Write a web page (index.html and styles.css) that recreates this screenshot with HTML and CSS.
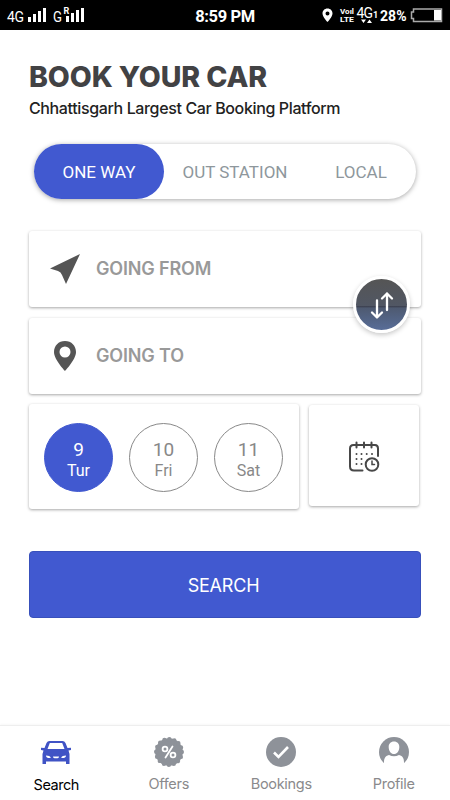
FILE: index.html
```html
<!DOCTYPE html>
<html lang="en">
<head>
    <meta charset="utf-8">
    <meta name="viewport" content="width=device-width, initial-scale=1">
    <title>Book Your Car</title>
    <link rel="stylesheet" href="styles.css">
</head>
<body>
    <header class="status-bar">
        <svg class="status-left" width="90" height="30" viewBox="0 0 90 30" fill="#fff">
            <text class="net" x="7" y="22" textLength="17">4G</text>
            <path d="M28 17h3v5h-3zM33 14h3v8h-3zM38 11h3v11h-3zM43 8h3v14h-3z"/>
            <text class="net" x="53" y="22" textLength="9" lengthAdjust="spacingAndGlyphs">G</text>
            <text class="roaming" x="63.5" y="13.5">R</text>
            <path d="M66 16h3v6h-3zM71 13h3v9h-3zM76 10h3v12h-3zM81 8h3v14h-3z"/>
        </svg>
        <span class="time">8:59 PM</span>
        <svg class="status-right" width="130" height="30" viewBox="320 0 130 30" fill="#fff">
            <path fill-rule="evenodd" d="M327.5 8.500c-3 0-5 2.200-5 5 0 3.300 5 8.500 5 8.500s5-5.200 5-8.500c0-2.800-2-5-5-5zm0 3a2 2 0 1 1 0 4 2 2 0 0 1 0-4z"/>
            <text class="volte" x="340" y="14" textLength="14" lengthAdjust="spacingAndGlyphs">Voıl</text>
            <text class="volte" x="340" y="21.500" textLength="14" lengthAdjust="spacingAndGlyphs">LTE</text>
            <text class="net" x="356.500" y="18" textLength="16.500">4G</text>
            <text class="sim" x="373" y="18">1</text>
            <path d="M361 19.500h5l-2.500 3.500zM367 23h5l-2.500-3.500z"/>
            <text class="percent" x="380" y="21" textLength="26.500">28%</text>
            <path d="M413.500 9h28v12.500h-28v-3h-2v-6.500h2z" fill="none" stroke="#aaa" stroke-width="1.500"/>
            <path d="M434 10h7v10.500h-7z"/>
        </svg>
    </header>

    <main class="content">
        <h1>BOOK YOUR CAR</h1>
        <p class="tagline">Chhattisgarh Largest Car Booking Platform</p>

        <div class="tabs">
            <button class="tab active">ONE WAY</button>
            <button class="tab station">OUT STATION</button>
            <button class="tab local">LOCAL</button>
        </div>

        <div class="route">
            <div class="card place">
                <svg width="32" height="32" viewBox="0 0 32 32" fill="#555">
                    <path d="M31 1L1 15.500 9 18q3 1 4 4l4 9z"/>
                </svg>
                <span>GOING FROM</span>
            </div>
            <div class="card place">
                <svg width="32" height="32" viewBox="0 0 32 32" fill="#555">
                    <path fill-rule="evenodd" d="M16 1C9.500 1 5 5.800 5 12c0 7.500 11 19 11 19s11-11.500 11-19C27 5.800 22.500 1 16 1zm0 5.500a5.500 5.500 0 1 1 0 11 5.500 5.500 0 0 1 0-11z"/>
                </svg>
                <span>GOING TO</span>
            </div>
            <button class="swap" aria-label="Swap">
                <svg width="52" height="52" viewBox="0 0 52 52" fill="none" stroke="#fff" stroke-width="2.300" stroke-linecap="round" stroke-linejoin="round">
                    <path d="M21 21.500v17M16 33.500l5 5 5-5M31 31V14.500M26 19.500l5-5 5 5"/>
                </svg>
            </button>
        </div>

        <div class="date-row">
            <div class="card dates">
                <button class="day active"><b>9</b><span>Tur</span></button>
                <button class="day"><b>10</b><span>Fri</span></button>
                <button class="day"><b>11</b><span>Sat</span></button>
            </div>
            <button class="card calendar" aria-label="Calendar">
                <svg width="32" height="32" viewBox="0 0 32 32" fill="none" stroke="#484848" stroke-width="2" stroke-linecap="round">
                    <path d="M14.500 30.500H6q-4 0-4-4V8.500Q2 5 5.500 5h21.500q3 0 3 3.500v7.500M8.500 2.500v5M16 2.500v5M23.500 2.500v5"/>
                    <circle cx="24" cy="24.500" r="6.300"/>
                    <path d="M24 21v3.500h2.500" stroke-width="1.500"/>
                    <path d="M8.500 14h.01M13.500 14h.01M18.700 14h.01M24 14h.01M8.500 19h.01M13.500 19h.01M8.500 24h.01M13.500 24h.01"/>
                </svg>
            </button>
        </div>

        <button class="search-btn">SEARCH</button>
    </main>

    <nav class="bottom-nav">
        <a class="nav-item active">
            <svg width="32" height="32" viewBox="0 0 32 32" fill="#4053c5">
                <path fill-rule="evenodd" d="M9.500 5h13q2 0 3 2l2 5 3.500-.2v2.200l-2.500.5 1 3.500v10h-3.500v-2.500H6v2.500H2.500V18l1-3.500L1 14v-2.200l3.500.2 2-5q1-2 3-2zm.3 2L7.500 13h17l-2.300-6zM6 19.500c0 2.200 2 2.800 4.800 2.500-.5-1.800-2.300-2.500-4.800-2.500zm20 0c-2.500 0-4.300.7-4.800 2.500 2.800.3 4.800-.3 4.800-2.500zM13 20.500q0 1.700 1.500 1.700h3q1.500 0 1.500-1.700z"/>
            </svg>
            <span>Search</span>
        </a>
        <a class="nav-item">
            <svg width="32" height="32" viewBox="0 0 32 32">
                <circle cx="16" cy="16" r="13.800" fill="#8e9299"/>
                <circle cx="16" cy="16" r="12.800" fill="none" stroke="#8e9299" stroke-width="4.400" stroke-linecap="round" stroke-dasharray="0 5.0265"/>
                <g fill="none" stroke="#fff" stroke-width="1.800">
                    <circle cx="12" cy="13" r="2.400"/>
                    <circle cx="20" cy="19" r="2.400"/>
                    <path d="M19.500 10.500l-7 11" stroke-linecap="round"/>
                </g>
            </svg>
            <span>Offers</span>
        </a>
        <a class="nav-item">
            <svg width="32" height="32" viewBox="0 0 32 32">
                <circle cx="16" cy="16" r="15" fill="#8e9299"/>
                <path d="M9 16.500l4.500 4.500 9.500-10" fill="none" stroke="#fff" stroke-width="2.600"/>
            </svg>
            <span>Bookings</span>
        </a>
        <a class="nav-item">
            <svg width="32" height="32" viewBox="0 0 32 32">
                <circle cx="16" cy="16" r="15" fill="#8e9299"/>
                <path d="M16 5.500c3.600 0 5.500 2.600 5.300 6-.3 4-2.300 6.500-5.300 6.500s-5-2.500-5.300-6.500c-.2-3.400 1.700-6 5.300-6zM6 32v-5.500c0-4 1-6.500 5-7.500q5 2.500 10 0c4 1 5 3.500 5 7.500V32z" fill="#fff"/>
            </svg>
            <span>Profile</span>
        </a>
    </nav>
</body>
</html>
```
FILE: styles.css
```css
* {
    box-sizing: border-box;
}
body {
    margin: 0;
    height: 800px;
    display: flex;
    flex-direction: column;
    overflow: hidden;
    background: #fff;
    font-family: Inter, sans-serif;
}
button {
    padding: 0;
    border: none;
    background: none;
    font-family: Roboto, sans-serif;
    cursor: pointer;
}
svg {
    display: block;
    flex: none;
}
.status-bar {
    flex: none;
    height: 30px;
    display: flex;
    justify-content: space-between;
    background: #000;
    color: #fff;
    font-family: Roboto, sans-serif;
}
.time {
    margin-left: 40px;
    font-size: 16.5px;
    font-weight: 700;
    line-height: 33px;
    letter-spacing: -0.4px;
    white-space: nowrap;
}
.net {
    font-size: 14px;
}
.roaming {
    font-size: 9px;
    font-weight: 700;
}
.volte {
    font-size: 7px;
    font-weight: 700;
}
.sim {
    font-size: 9px;
    font-weight: 700;
}
.percent {
    font-size: 14px;
    font-weight: 700;
}
.content {
    flex: 1;
    padding: 30px 29px 0;
}
h1 {
    margin: 0;
    color: #424244;
    font-size: 28.5px;
    font-weight: 800;
    line-height: 34px;
    letter-spacing: -0.1px;
    white-space: nowrap;
}
.tagline {
    margin: 4px 0 0;
    color: #222;
    font-size: 16px;
    font-weight: 450;
    line-height: 21px;
    letter-spacing: -0.37px;
    white-space: nowrap;
}
.tabs {
    display: flex;
    width: 382px;
    height: 55px;
    margin: 25px 0 0 5px;
    border-radius: 28px;
    box-shadow: 0 1px 5px rgba(0,0,0,0.35);
}
.tab {
    color: #8e979c;
    font-size: 17px;
}
.tab.active {
    width: 130px;
    border-radius: 28px;
    background: #4159d0;
    color: #fff;
}
.station {
    width: 142px;
}
.local {
    width: 110px;
}
.card {
    border-radius: 3px;
    background: #fff;
    box-shadow: 0 1px 3px rgba(0,0,0,0.35);
}
.route {
    position: relative;
    display: grid;
    gap: 11px;
    margin-top: 32px;
}
.place {
    display: flex;
    align-items: center;
    height: 76px;
    padding-left: 20px;
    gap: 15px;
    color: #999;
    font-size: 18px;
    font-weight: 600;
    letter-spacing: -0.15px;
}
.place span {
    margin-top: -2px;
}
.swap {
    position: absolute;
    top: 45px;
    right: 11px;
    width: 57px;
    height: 57px;
    border: 3px solid #fff;
    border-radius: 50%;
    background: linear-gradient(#555 0%, #515764 53%, #3d4252 54%, #4e5a71 57%, #586d98 100%);
    box-shadow: 0 2px 5px rgba(0,0,0,0.22);
}
.date-row {
    display: flex;
    gap: 10px;
    margin-top: 10px;
}
.dates {
    display: flex;
    width: 270px;
    height: 105px;
    padding: 19px 15px;
    gap: 16px;
}
.day {
    display: flex;
    flex-direction: column;
    align-items: center;
    width: 69px;
    height: 69px;
    padding-top: 15px;
    border: 1px solid #888;
    border-radius: 50%;
    color: #888;
    font-size: 16px;
}
.day b {
    font-size: 19px;
    font-weight: 400;
    line-height: 21px;
}
.day span {
    line-height: 22px;
}
.day.active {
    border-color: #4159d0;
    background: #4159d0;
    color: #fff;
}
.calendar {
    display: flex;
    align-items: center;
    justify-content: center;
    width: 110px;
    height: 101px;
    margin-top: 1px;
}
.search-btn {
    display: block;
    width: 392px;
    height: 67px;
    margin-top: 42px;
    border: 1px solid #3850bb;
    border-radius: 4px;
    background: #4159d0;
    color: #fff;
    font-family: Inter, sans-serif;
    font-size: 18px;
    line-height: 67px;
    letter-spacing: -0.2px;
    padding-right: 3px;
}
.bottom-nav {
    flex: none;
    display: grid;
    grid-template-columns: repeat(4, 1fr);
    height: 75px;
    padding-top: 10px;
    border-top: 1px solid #eee;
    box-shadow: 0 -1px 2px rgba(0,0,0,0.03);
}
.nav-item {
    display: flex;
    flex-direction: column;
    align-items: center;
    color: #8a8a8c;
    font-size: 14.5px;
    line-height: 20px;
    letter-spacing: -0.3px;
}
.nav-item span {
    margin-top: 6px;
}
.nav-item.active {
    color: #000;
    letter-spacing: -0.45px;
}
.nav-item.active span {
    margin-top: 7px;
}
```
